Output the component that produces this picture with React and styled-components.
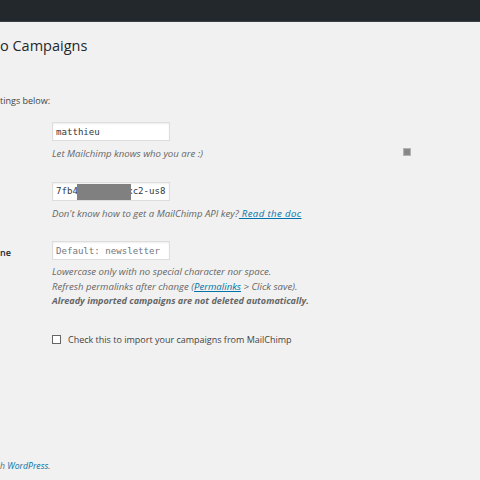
import React from "react";
import styled, { createGlobalStyle } from "styled-components";

const GlobalStyle = createGlobalStyle`
  html, body { margin: 0; padding: 0; }
  body {
    background: #f1f1f1;
    overflow: hidden;
    font-family: "Open Sans", "Noto Sans", sans-serif;
    color: #444;
    font-size: 9px;
  }
`;

const Page = styled.div`
  position: relative;
  display: flex;
  flex-direction: column;
  min-height: 480px;
  height: 480px;
`;

const TopBar = styled.div`
  height: 22px;
  background: #23282d;
  border-bottom: 1px solid #3a3f44;
  box-sizing: border-box;
`;

const Title = styled.h1`
  margin: 14px 0 0 0;
  font-size: 14.5px;
  line-height: 20px;
  font-weight: 400;
  color: #23282d;
  white-space: nowrap;
`;

const Intro = styled.p`
  margin: 38px 0 0 0;
  line-height: 14px;
  color: #444;
  white-space: nowrap;
`;

const FormTable = styled.div`
  display: grid;
  grid-template-columns: 52px 1fr;
  margin-top: 4px;
`;

const Label = styled.div`
  padding-top: ${(p) => p.$top || 10}px;
  font-weight: 600;
  color: #23282d;
  line-height: 14px;
  white-space: nowrap;
`;

const Field = styled.div`
  padding: ${(p) => p.$top || 10}px 0 ${(p) => p.$bottom || 10}px 0;
`;

const InputWrap = styled.div`
  position: relative;
  width: 118px;
`;

const TextInput = styled.input`
  display: block;
  box-sizing: border-box;
  width: 118px;
  height: 19px;
  margin: 0;
  padding: 0 3px;
  border: 1px solid #ddd;
  background: #fff;
  box-shadow: inset 0 1px 2px rgba(0, 0, 0, 0.07);
  font-family: "DejaVu Sans Mono", "Liberation Mono", monospace;
  font-size: 9.1px;
  color: #32373c;
  outline: none;
  &::placeholder {
    color: #72777c;
  }
`;

const Redact = styled.span`
  position: absolute;
  left: 25px;
  top: 2px;
  width: 54px;
  height: 16px;
  background: #808080;
`;

const Desc = styled.p`
  margin: ${(p) => p.$gap || 6}px 0 0 0;
  font-style: italic;
  font-size: 9.6px;
  color: #666;
  line-height: 14.5px;
  white-space: nowrap;
`;

const Strong = styled.strong`
  font-weight: 700;
  font-size: 9.1px;
`;

const Link = styled.a`
  color: #0073aa;
  text-decoration: underline;
  letter-spacing: ${(p) => p.$spread || 0}px;
`;

const CheckRow = styled.label`
  display: flex;
  align-items: center;
  gap: 7px;
  line-height: 14px;
  color: #444;
  white-space: nowrap;
`;

const CheckBox = styled.input`
  appearance: none;
  margin: 0;
  width: 9px;
  height: 9px;
  box-sizing: border-box;
  border: 1px solid #666;
  background: #fff;
`;

const Marker = styled.div`
  position: absolute;
  left: 403px;
  top: 148px;
  width: 8px;
  height: 8px;
  box-sizing: border-box;
  background: #888;
  border: 1px solid #b4b4b4;
`;

const Footer = styled.p`
  margin: auto 0 0 0;
  padding-bottom: 7px;
  line-height: 14px;
  font-style: italic;
  font-size: 8.7px;
  color: #666;
  white-space: nowrap;
`;

const FooterLink = styled.a`
  color: #0073aa;
  text-decoration: none;
`;

export default function App() {
  return (
    <>
      <GlobalStyle />
      <Page>
        <TopBar />
        <Title>o Campaigns</Title>
        <Intro>tings below:</Intro>
        <FormTable>
          <Label />
          <Field>
            <TextInput defaultValue="matthieu" />
            <Desc>Let Mailchimp knows who you are :)</Desc>
          </Field>

          <Label />
          <Field>
            <InputWrap>
              <TextInput defaultValue="7fb4xxxxxxxxxxc2-us8" readOnly />
              <Redact />
            </InputWrap>
            <Desc>
              Don't know how to get a MailChimp API key?
              <Link href="#" $spread={0.4}> Read the doc</Link>
            </Desc>
          </Field>

          <Label $top={15}>ne</Label>
          <Field>
            <TextInput placeholder="Default: newsletter" />
            <Desc $gap={5}>
              Lowercase only with no special character nor space.
              <br />
              Refresh permalinks after change (<Link href="#">Permalinks</Link> &gt; Click save).
              <br />
              <Strong>Already imported campaigns are not deleted automatically.</Strong>
            </Desc>
          </Field>

          <Label />
          <Field $top={14}>
            <CheckRow>
              <CheckBox type="checkbox" />
              Check this to import your campaigns from MailChimp
            </CheckRow>
          </Field>
        </FormTable>
        <Footer>
          h <FooterLink href="#">WordPress</FooterLink>.
        </Footer>
        <Marker />
      </Page>
    </>
  );
}
